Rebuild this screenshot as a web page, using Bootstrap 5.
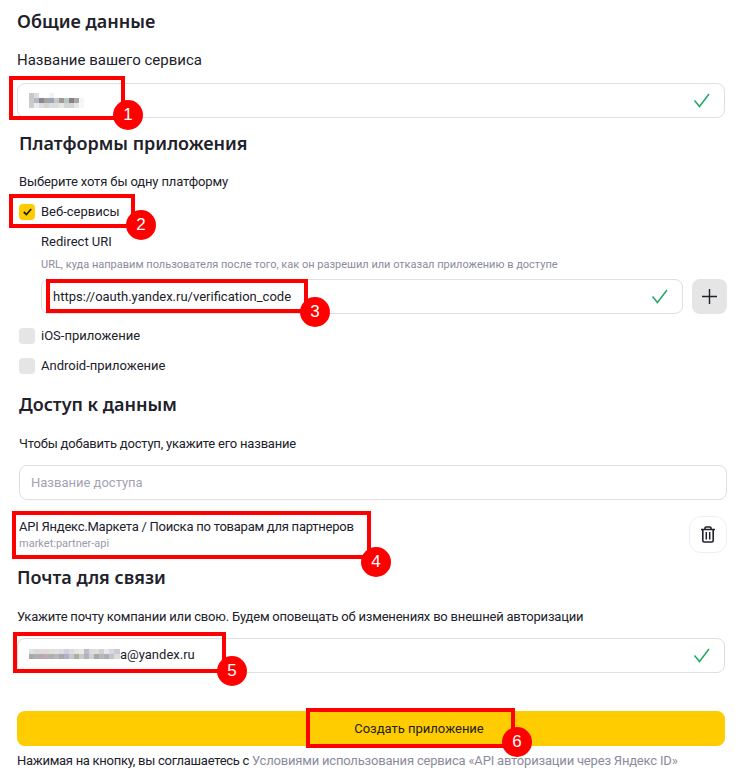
<!DOCTYPE html>
<html lang="ru">
<head>
<meta charset="utf-8">
<title>Создание приложения</title>
<link href="https://cdn.jsdelivr.net/npm/bootstrap@5.3.0/dist/css/bootstrap.min.css" rel="stylesheet">
<style>
html,body{height:784px;overflow:hidden}
body{position:relative;background:#fff;color:#21212b;font-family:Roboto,"Liberation Sans",sans-serif;font-size:13px;line-height:18px}
.page-wrap{padding:11px 15px 0 17px}
.inset{margin-left:2px;margin-right:-2px}
.sec-title{font-family:"Noto Sans","Liberation Sans",sans-serif;font-size:18px;line-height:20px;font-weight:600;margin:0;padding-bottom:2px;color:#21212b}
.sec-note{margin:0;height:18px;padding-top:1px}
.tight{letter-spacing:-.2px}
.tight-s{letter-spacing:-.13px}
.first-label{font-size:15px;padding-top:0;letter-spacing:0}
.fld{position:relative;height:35px}
.fld .form-control{height:100%;border:1px solid #dfdfe0;border-radius:8px;padding:0 40px 0 11px;font-size:13px;line-height:18px;color:#21212b;box-shadow:none;background:#fff}
.fld .form-control::placeholder{color:#a3a3b2;opacity:1}
.ok-mark{position:absolute;right:15px;top:9px;width:17px;height:17px}
.blur-px{position:absolute;left:12px;top:10px;pointer-events:none}
.blur-mail{top:11px}
.chk{width:16px;height:16px;border-radius:4px;background:#e5e5e5;flex:none}
.chk-on{background:#ffcc00;display:flex;align-items:center;justify-content:center}
.plain-row{height:18px}
.hint{font-size:11px;line-height:14px;color:#8b8b9c}
.plus-btn{width:35px;height:35px;border:0;border-radius:8px;background:#e5e5e5;padding:0;flex:none;display:flex;align-items:center;justify-content:center}
.trash-btn{width:38px;height:37px;border:1px solid #eeeef2;border-radius:12px;background:#fff;padding:0;flex:none;display:flex;align-items:center;justify-content:center}
.scope-id{font-size:11px;line-height:14px;color:#9a9aab}
.go-btn{display:block;width:100%;height:35px;border:0;border-radius:8px;background:#ffcc00;color:#21201f;font-size:13px;font-weight:400;padding:0 0 0 96px}
.go-btn:hover,.go-btn:active{background:#ffcc00!important;color:#21201f!important}
.terms{letter-spacing:-.28px}
.terms a{color:#8b8b9c;text-decoration:none;letter-spacing:-.19px}
.red-frame{position:absolute;border:4px solid #fe0000;pointer-events:none}
.red-dot{position:absolute;width:30px;height:30px;border-radius:50%;background:#fe0000;color:#fff;font:400 17px/30px "Liberation Sans",sans-serif;text-align:center}
</style>
</head>
<body>
<main class="page-wrap">
  <section>
    <h2 class="sec-title">Общие данные</h2>
    <p class="sec-note first-label" style="margin-top:18px">Название вашего сервиса</p>
    <div class="fld" style="margin-top:14px">
      <input class="form-control" type="text" aria-label="Название вашего сервиса" value="">
      <svg class="blur-px" width="60" height="15" shape-rendering="crispEdges" viewBox="0 0 60 15" aria-hidden="true">
        <rect x="0" y="0" width="5" height="5" fill="#c8c8c8"/><rect x="5" y="0" width="5" height="5" fill="#dcdce0"/><rect x="20" y="0" width="5" height="5" fill="#f0f3f7"/>
        <rect x="0" y="5" width="5" height="5" fill="#c0cbd2"/><rect x="5" y="5" width="5" height="5" fill="#bcb6bc"/><rect x="10" y="5" width="5" height="5" fill="#858898"/><rect x="15" y="5" width="5" height="5" fill="#a8a4a4"/><rect x="20" y="5" width="5" height="5" fill="#9ca4b8"/><rect x="25" y="5" width="5" height="5" fill="#c4c8cc"/><rect x="30" y="5" width="5" height="5" fill="#a09a94"/><rect x="35" y="5" width="5" height="5" fill="#b8c8c8"/><rect x="40" y="5" width="5" height="5" fill="#8c8088"/><rect x="45" y="5" width="5" height="5" fill="#a8a8a8"/><rect x="50" y="5" width="5" height="5" fill="#f0f6f8"/>
        <rect x="0" y="10" width="5" height="5" fill="#cccccc"/><rect x="5" y="10" width="5" height="5" fill="#e8ecec"/><rect x="10" y="10" width="5" height="5" fill="#dcdce0"/><rect x="15" y="10" width="5" height="5" fill="#d8d4cc"/><rect x="20" y="10" width="5" height="5" fill="#dcdcdc"/><rect x="25" y="10" width="5" height="5" fill="#dcdcdc"/><rect x="30" y="10" width="5" height="5" fill="#e4e8e4"/><rect x="35" y="10" width="5" height="5" fill="#d4d4d4"/><rect x="40" y="10" width="5" height="5" fill="#d4d4d4"/><rect x="45" y="10" width="5" height="5" fill="#e4e8e4"/><rect x="50" y="10" width="5" height="5" fill="#f8f8f8"/>
      </svg>
      <svg class="ok-mark" viewBox="0 0 17 17" fill="none" aria-hidden="true"><path d="M1.500 8.500 6.500 14.500 16 2" stroke="#1fa866" stroke-width="1.500"/></svg>
    </div>
  </section>

  <section class="inset" style="margin-top:15px">
    <h2 class="sec-title">Платформы приложения</h2>
    <p class="sec-note tight-s" style="margin-top:17px">Выберите хотя бы одну платформу</p>
    <div class="d-flex align-items-center plain-row" style="margin-top:13px;gap:6px"><span class="chk chk-on"><svg width="9" height="8" viewBox="0 0 9 8" fill="none"><path d="M.8 4 3.400 6.500 8.200 1" stroke="#21201f" stroke-width="1.800"/></svg></span>Веб-сервисы</div>
    <div style="margin-left:22px">
      <div class="plain-row" style="margin-top:12px">Redirect URI</div>
      <div class="hint" style="margin-top:7px">URL, куда направим пользователя после того, как он разрешил или отказал приложению в доступе</div>
      <div class="d-flex" style="margin-top:7px;gap:9px">
        <div class="fld flex-grow-1">
          <input class="form-control" type="text" aria-label="Redirect URI" value="https://oauth.yandex.ru/verification_code">
          <svg class="ok-mark" viewBox="0 0 17 17" fill="none" aria-hidden="true"><path d="M1.500 8.500 6.500 14.500 16 2" stroke="#1fa866" stroke-width="1.500"/></svg>
        </div>
        <button class="plus-btn" type="button" aria-label="Добавить"><svg width="15" height="15" viewBox="0 0 15 15" fill="none"><path d="M7.500 0v15M0 7.500h15" stroke="#21212b" stroke-width="1.400"/></svg></button>
      </div>
    </div>
    <div class="d-flex align-items-center plain-row" style="margin-top:13px;gap:6px"><span class="chk"></span>iOS-приложение</div>
    <div class="d-flex align-items-center plain-row" style="margin-top:12px;gap:6px"><span class="chk"></span>Android-приложение</div>
  </section>

  <section class="inset" style="margin-top:19px">
    <h2 class="sec-title">Доступ к данным</h2>
    <p class="sec-note tight" style="margin-top:18px">Чтобы добавить доступ, укажите его название</p>
    <div class="fld" style="margin-top:13px">
      <input class="form-control" type="text" placeholder="Название доступа" aria-label="Название доступа">
    </div>
    <div class="d-flex justify-content-between align-items-center" style="margin-top:16px">
      <div>
        <div class="tight" style="letter-spacing:-.24px">API Яндекс.Маркета / Поиска по товарам для партнеров</div>
        <div class="scope-id" style="margin-top:1px">market:partner-api</div>
      </div>
      <button class="trash-btn" type="button" aria-label="Удалить"><svg width="14" height="17" viewBox="0 0 14 17" fill="none"><path d="M0 3.500h14M4 3.500V2a1 1 0 0 1 1-1h4a1 1 0 0 1 1 1v1.500" stroke="#21212b" stroke-width="1.600"/><path d="M1.800 4v10.500a1.500 1.500 0 0 0 1.500 1.500h7.400a1.500 1.500 0 0 0 1.500-1.500V4" stroke="#21212b" stroke-width="1.600"/><path d="M5.300 6v7.500M8.700 6v7.500" stroke="#21212b" stroke-width="1.500"/></svg></button>
    </div>
  </section>

  <section style="margin-top:14px">
    <h2 class="sec-title">Почта для связи</h2>
    <p class="sec-note tight" style="margin-top:18px">Укажите почту компании или свою. Будем оповещать об изменениях во внешней авторизации</p>
    <div class="fld" style="margin-top:13px">
      <input class="form-control" type="text" aria-label="Почта" value="">
      <span class="position-absolute" style="left:103px;top:8px">a@yandex.ru</span>
      <svg class="blur-px blur-mail" width="92" height="10" shape-rendering="crispEdges" viewBox="0 0 92 10" aria-hidden="true">
        <rect x="0" y="0" width="5" height="5" fill="#dfe2e4"/><rect x="5" y="0" width="5" height="5" fill="#d8dadc"/><rect x="10" y="0" width="5" height="5" fill="#dcdcdc"/><rect x="15" y="0" width="5" height="5" fill="#e4d8dc"/><rect x="20" y="0" width="5" height="5" fill="#dde0dc"/><rect x="25" y="0" width="5" height="5" fill="#dfe3df"/><rect x="30" y="0" width="5" height="5" fill="#dcdce4"/><rect x="35" y="0" width="5" height="5" fill="#d0d0e0"/><rect x="40" y="0" width="5" height="5" fill="#dcdce0"/><rect x="45" y="0" width="5" height="5" fill="#e4e4e4"/><rect x="50" y="0" width="5" height="5" fill="#ece8e8"/><rect x="55" y="0" width="5" height="5" fill="#b8bccc"/><rect x="60" y="0" width="5" height="5" fill="#dcdcdc"/><rect x="65" y="0" width="5" height="5" fill="#dcdfdc"/><rect x="70" y="0" width="5" height="5" fill="#d0d0d0"/><rect x="75" y="0" width="5" height="5" fill="#e8e8ec"/><rect x="80" y="0" width="5" height="5" fill="#d8d8e0"/><rect x="85" y="0" width="6" height="5" fill="#c8ccd4"/>
        <rect x="0" y="5" width="5" height="5" fill="#a8aaa8"/><rect x="5" y="5" width="5" height="5" fill="#b0b0b0"/><rect x="10" y="5" width="5" height="5" fill="#b4acac"/><rect x="15" y="5" width="5" height="5" fill="#c4a8b4"/><rect x="20" y="5" width="5" height="5" fill="#aeb0ac"/><rect x="25" y="5" width="5" height="5" fill="#b8b8b4"/><rect x="30" y="5" width="5" height="5" fill="#a8a8b0"/><rect x="35" y="5" width="5" height="5" fill="#b4aecc"/><rect x="40" y="5" width="5" height="5" fill="#c8c8c8"/><rect x="45" y="5" width="5" height="5" fill="#a8b0a0"/><rect x="50" y="5" width="5" height="5" fill="#c8ccc8"/><rect x="55" y="5" width="5" height="5" fill="#b0b4b4"/><rect x="60" y="5" width="5" height="5" fill="#d0d0d0"/><rect x="65" y="5" width="5" height="5" fill="#a8a8a8"/><rect x="70" y="5" width="5" height="5" fill="#b8b8b8"/><rect x="75" y="5" width="5" height="5" fill="#a8b0bc"/><rect x="80" y="5" width="5" height="5" fill="#c4c4c8"/><rect x="85" y="5" width="6" height="5" fill="#dcdce0"/>
      </svg>
      <svg class="ok-mark" viewBox="0 0 17 17" fill="none" aria-hidden="true"><path d="M1.500 8.500 6.500 14.500 16 2" stroke="#1fa866" stroke-width="1.500"/></svg>
    </div>
    <button class="btn go-btn" type="button" style="margin-top:38px">Создать приложение</button>
    <p class="terms mb-0" style="margin-top:6px;white-space:nowrap">Нажимая на кнопку, вы соглашаетесь с <a href="#">Условиями использования сервиса «API авторизации через Яндекс ID»</a></p>
  </section>
</main>

<div class="red-frame" style="left:9px;top:76px;width:116px;height:44px"></div><div class="red-dot" style="left:113px;top:100px">1</div>
<div class="red-frame" style="left:9px;top:194px;width:126px;height:34px"></div><div class="red-dot" style="left:126px;top:210px">2</div>
<div class="red-frame" style="left:46px;top:279px;width:262px;height:34px"></div><div class="red-dot" style="left:300px;top:297px">3</div>
<div class="red-frame" style="left:12px;top:511px;width:359px;height:48px"></div><div class="red-dot" style="left:361px;top:547px">4</div>
<div class="red-frame" style="left:13px;top:632px;width:213px;height:41px"></div><div class="red-dot" style="left:217px;top:656px">5</div>
<div class="red-frame" style="left:306px;top:708px;width:209px;height:40px"></div><div class="red-dot" style="left:502px;top:727px">6</div>
</body>
</html>
